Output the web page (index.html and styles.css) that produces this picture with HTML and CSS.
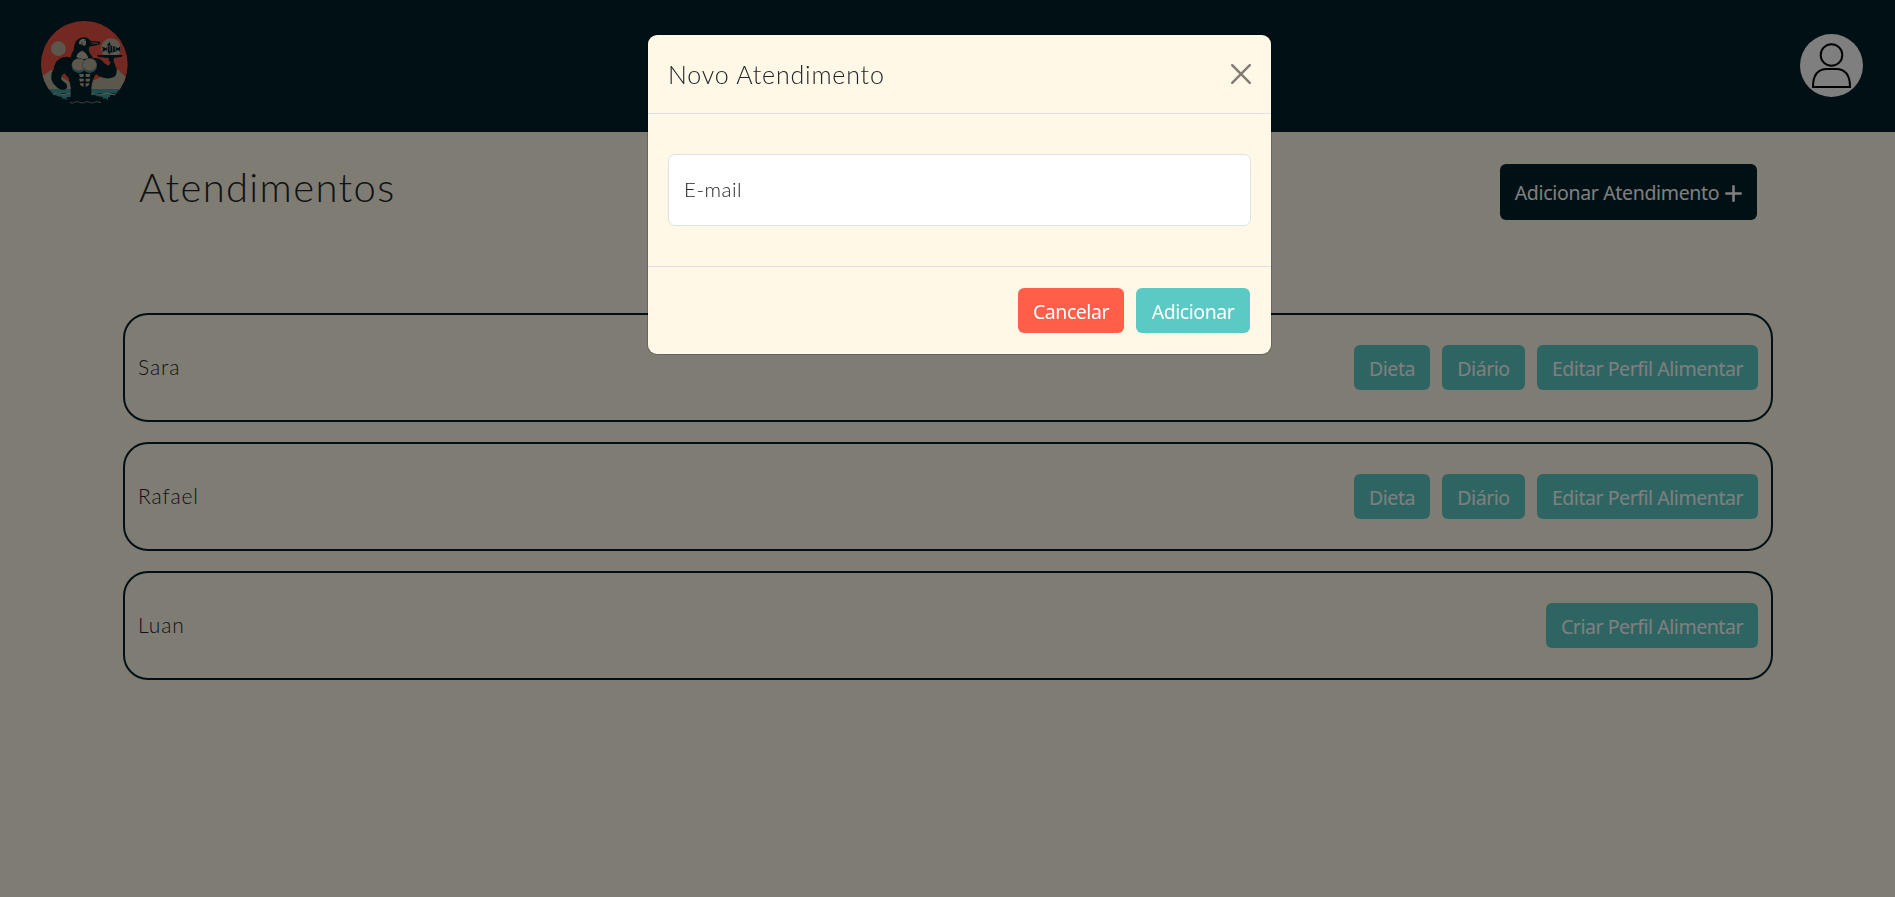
FILE: index.html
```html
<!DOCTYPE html>
<html lang="pt-BR">
<head>
<meta charset="utf-8">
<title>Atendimentos</title>
<link rel="stylesheet" href="styles.css">
</head>
<body>
<header class="topbar">
  <svg class="logo" viewBox="0 0 330 330" aria-label="Logo">
    <defs><clipPath id="disc"><circle cx="163" cy="163" r="130"/></clipPath></defs>
    <g clip-path="url(#disc)">
      <path fill="#e65345" d="M30 30h270v210H30z"/>
      <path fill="#b9ae9b" d="M30 202 64 180l60 40v20H30zM184 214l38-16 40-20 40 35v27H184z"/>
      <path fill="#419b9b" d="M30 237h270v13H30z"/>
      <path fill="#b9ae9b" d="M30 250q10-4 20 0t20 0 20 0 20 0 20 0v8H30zM180 250q10-4 20 0t20 0 20 0 20 0 20 0v8H180z"/>
      <path fill="#002029" d="M30 255h270v50H30z"/>
      <path fill="#419b9b" d="M70 252q14-6 22 0t18 0h12v9h-12v9l-8-5-6 2v-6l-12-2zM184 252q14-6 22 0t18 0h16v9h-6v9l-7-5-8 2v-6l-15-2z"/>
    </g>
    <circle cx="85" cy="116" r="22" fill="#b9ae9b"/>
    <circle cx="243" cy="115" r="30" fill="#b9ae9b"/>
    <g fill="#002029">
      <path d="M122 142Q123 130 131 120Q133 84 160 82Q174 82 181 92L209 95L212 99L206 104L178 110C174 120 178 128 184 136L190 145Q210 141 222 159L235 168L242 158L236 150L236 139H252L251 154L260 176Q262 196 250 202Q230 210 206 198L198 192Q187 208 184 232V275H122V232L116 204L103 190Q92 197 94 209L109 221Q115 231 107 238Q89 243 78 229Q62 214 64 200Q63 188 71 178Q73 156 88 147Q103 137 122 142Z"/>
      <path d="M201 135h77l-3 5-24 4h-21l-26-4z"/>
      <path d="m216 110 11 4q18-14 38 1l6-7v18l-6-6q-20 14-38 1l-11 5 3-8z"/>
      <path d="m231 107 7-12 5 12zM232 123l7 11 3-11z"/>
    </g>
    <path d="M147 102q-2-14 14-16l7 4-8 4q-7 2-5 10zM139 140q3-14 18-18 15 7 19 25-10-3-19 3-10-5-18-10z" fill="#c3b8a4"/>
    <ellipse cx="162" cy="100" rx="6" ry="8" fill="#b9ae9b"/>
    <path d="m181 96 23 4M184 102l20-2" stroke="#e65345" stroke-width="2" fill="none"/>
    <circle cx="166" cy="94" r="2" fill="#fff"/>
    <g fill="#419b9b"><circle cx="147" cy="167" r="22"/><circle cx="179" cy="167" r="22"/></g>
    <g fill="#b9ae9b" stroke="#002029" stroke-width="1"><ellipse cx="147" cy="164" rx="22" ry="19"/><ellipse cx="179" cy="164" rx="22" ry="19"/></g>
    <path d="M147 192h14v8l-11 2zM167 192h14l-3 10-11-2zM147 206h14v8l-11 1zM167 206h14l-3 9-11-1zM149 220h12v10q-9 0-12-10zM167 220h12q-3 10-12 10z" fill="#b9ae9b"/>
    <path d="M232 109v15M240 108v16M248 108v16M256 110v12" stroke="#b9ae9b" stroke-width="2.500"/>
    <path d="M119 277q8 5 15 0t15 0 15 0 15 0 15 0 19 1" fill="none" stroke="#9b968a" stroke-width="2.500"/>
  </svg>
  <svg class="avatar" viewBox="0 0 63 63" aria-label="Perfil">
    <circle cx="31.500" cy="31.500" r="31.500" fill="#fff"/>
    <g fill="none" stroke="#000" stroke-width="2"><circle cx="31.500" cy="21" r="10.800"/><path d="M13 53c0-11 4-18 14-18h9c10 0 14 7 14 18z"/></g>
  </svg>
</header>
<main class="page">
  <div class="heading">
    <h1 class="title">Atendimentos</h1>
    <button class="btn btn-dark"><span class="add-label">Adicionar Atendimento</span><svg class="plus" viewBox="0 0 17 17"><path d="M8.500 1.300v14.400M1.300 8.500h14.400" stroke="#fff" stroke-width="2.600" stroke-linecap="round"/></svg></button>
  </div>
  <section class="list">
    <article class="card"><span class="name">Sara</span><div class="actions"><button class="btn diet">Dieta</button><button class="btn diary">Diário</button><button class="btn edit">Editar Perfil Alimentar</button></div></article>
    <article class="card"><span class="name">Rafael</span><div class="actions"><button class="btn diet">Dieta</button><button class="btn diary">Diário</button><button class="btn edit">Editar Perfil Alimentar</button></div></article>
    <article class="card"><span class="name">Luan</span><div class="actions"><button class="btn create">Criar Perfil Alimentar</button></div></article>
  </section>
</main>
<div class="backdrop">
  <div class="modal" role="dialog">
    <div class="modal-header"><h2 class="modal-title">Novo Atendimento</h2><svg class="close" viewBox="0 0 20 20" aria-label="Fechar"><path d="m1.200 1.200 17.600 17.600M18.800 1.200 1.200 18.800" stroke="#807c73" stroke-width="2.400" stroke-linecap="round"/></svg></div>
    <div class="modal-body"><div class="field">E-mail</div></div>
    <div class="modal-footer"><button class="btn cancel">Cancelar</button><button class="btn confirm">Adicionar</button></div>
  </div>
</div>
</body>
</html>
```
FILE: styles.css
```css
* { box-sizing: border-box; }
body { margin: 0; height: 897px; overflow: hidden; background: #fff8e7; color: #212529; font: 300 20px/30px Lato, sans-serif; }
.topbar { height: 132px; padding: 10px 32px 0 30px; background: #002029; display: flex; justify-content: space-between; }
.logo { width: 110px; height: 110px; }
.avatar { width: 63px; height: 63px; margin-top: 24px; }
.page { padding: 32px 122px 0 123px; }
.heading { height: 149px; padding: 0 16px; display: flex; justify-content: space-between; align-items: flex-start; }
.title { margin: -1px 0 0; font-size: 40px; line-height: 48px; font-weight: 300; letter-spacing: 1.35px; }
.btn { height: 45px; padding: 2px 0 0; border: 0; border-radius: 6px; background: #5ccac4; color: #fff; font: 400 19.500px/30px "Noto Sans", sans-serif; white-space: nowrap; letter-spacing: -.45px; text-align: center; }
.btn-dark { width: 257px; height: 56px; background: #002029; display: flex; align-items: center; justify-content: center; gap: 6px; letter-spacing: -.33px; }
.plus { width: 17px; height: 17px; }
.list { display: flex; flex-direction: column; gap: 20px; }
.card { height: 109px; border: 2px solid #002029; border-radius: 25px; padding: 0 13px; display: flex; align-items: center; justify-content: space-between; }
.name { font-size: 21px; letter-spacing: .9px; padding-bottom: 1px; }
.actions { display: flex; gap: 12px; }
.diet { width: 76px; }
.diary { width: 83px; }
.edit { width: 221px; }
.create { width: 212px; }
.backdrop { position: fixed; inset: 0; padding: 35px 0 0 24px; background: rgba(0,0,0,.5); display: flex; justify-content: center; align-items: flex-start; }
.modal { width: 623px; height: 319px; background: #fff8e7; border-radius: 9px; box-shadow: 0 0 0 1px rgba(0,0,0,.18); }
.modal-header { height: 79px; border-bottom: 1px solid #dee2e6; padding: 0 20px; display: flex; align-items: center; justify-content: space-between; }
.modal-title { margin: 0; padding-bottom: 1px; font-size: 25px; line-height: 38px; font-weight: 300; letter-spacing: .8px; }
.close { width: 20px; height: 20px; }
.modal-body { padding: 40px 20px; }
.field { height: 72px; border: 1px solid #dee2e6; border-radius: 7px; background: #fff; padding: 19px 15px; font-size: 20.500px; letter-spacing: .5px; }
.modal-footer { border-top: 1px solid #dee2e6; padding: 21px 21px; display: flex; justify-content: flex-end; gap: 12px; }
.cancel { width: 106px; background: #ff5f49; }
.confirm { width: 114px; }
```
